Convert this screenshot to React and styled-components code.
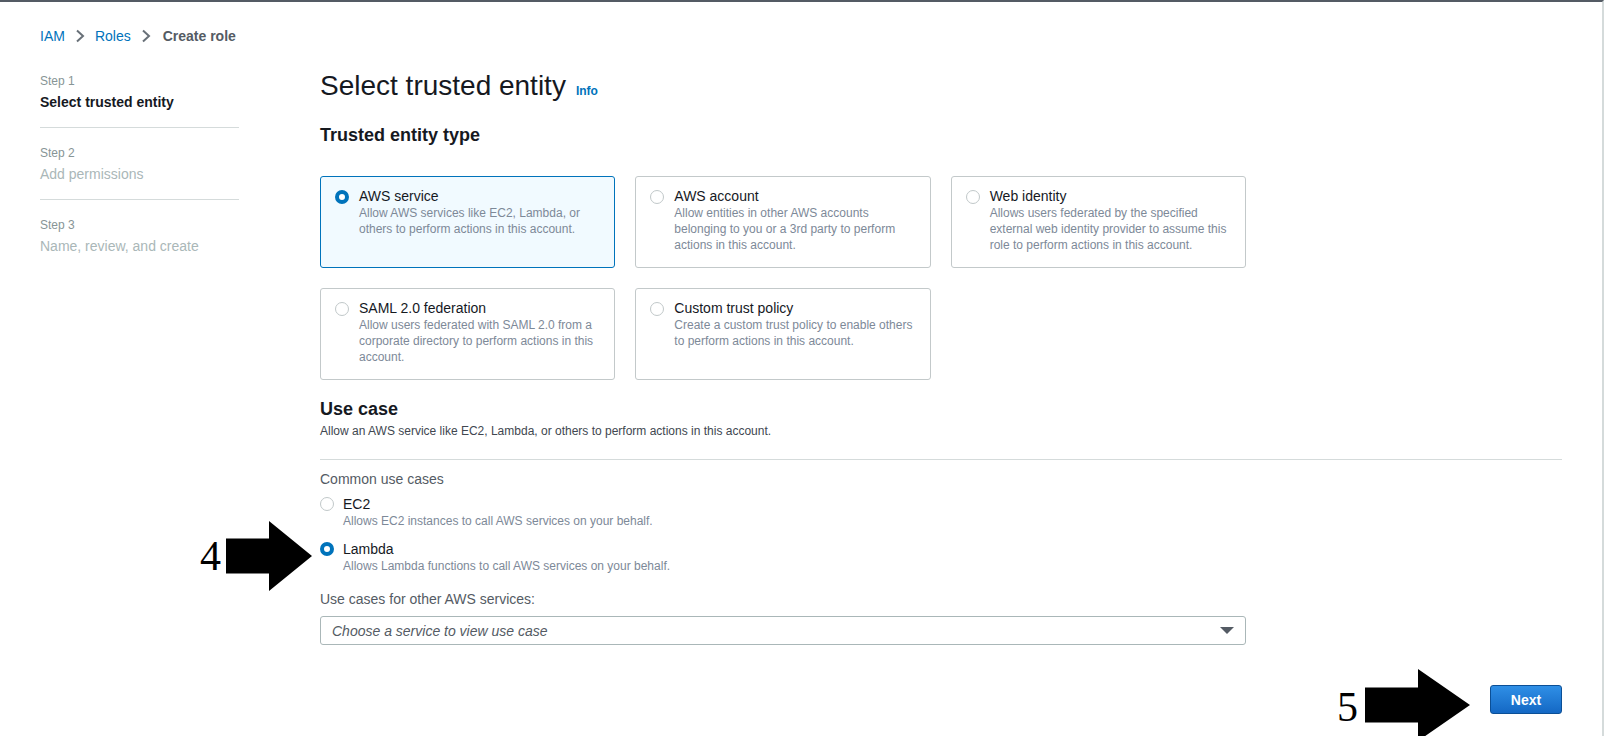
import React from "react";
import styled, { createGlobalStyle } from "styled-components";

const GlobalStyle = createGlobalStyle`
  * { box-sizing: border-box; }
  body {
    margin: 0;
    background: #ffffff;
    font-family: "Liberation Sans", Arial, sans-serif;
    color: #16191f;
  }
`;

const entityTypes = [
  {
    id: "service",
    title: "AWS service",
    lines: ["Allow AWS services like EC2, Lambda, or", "others to perform actions in this account."],
  },
  {
    id: "account",
    title: "AWS account",
    lines: [
      "Allow entities in other AWS accounts",
      "belonging to you or a 3rd party to perform",
      "actions in this account.",
    ],
  },
  {
    id: "web",
    title: "Web identity",
    lines: [
      "Allows users federated by the specified",
      "external web identity provider to assume this",
      "role to perform actions in this account.",
    ],
  },
  {
    id: "saml",
    title: "SAML 2.0 federation",
    lines: [
      "Allow users federated with SAML 2.0 from a",
      "corporate directory to perform actions in this",
      "account.",
    ],
  },
  {
    id: "custom",
    title: "Custom trust policy",
    lines: ["Create a custom trust policy to enable others", "to perform actions in this account."],
  },
];

const useCases = [
  { id: "ec2", title: "EC2", desc: "Allows EC2 instances to call AWS services on your behalf." },
  { id: "lambda", title: "Lambda", desc: "Allows Lambda functions to call AWS services on your behalf." },
];

const steps = [
  { label: "Step 1", name: "Select trusted entity", active: true },
  { label: "Step 2", name: "Add permissions" },
  { label: "Step 3", name: "Name, review, and create" },
];

const Chevron = () => (
  <svg width="12" height="14" viewBox="0 0 12 14">
    <polyline points="3,1.5 9,7 3,12.5" fill="none" stroke="#687078" strokeWidth="2" />
  </svg>
);

const Arrow = ({ width, height, neck }) => {
  const shaftTop = (height - neck) / 2;
  const headX = Math.round(width / 2);
  const pts = [
    `0,${shaftTop}`,
    `${headX},${shaftTop}`,
    `${headX},0`,
    `${width},${height / 2}`,
    `${headX},${height}`,
    `${headX},${shaftTop + neck}`,
    `0,${shaftTop + neck}`,
  ].join(" ");
  return (
    <svg width={width} height={height} viewBox={`0 0 ${width} ${height}`}>
      <polygon points={pts} fill="#000" />
    </svg>
  );
};

const App = () => {
  return (
    <>
      <GlobalStyle />
      <Page>
        <Breadcrumb>
          <CrumbLink>IAM</CrumbLink>
          <Chevron />
          <CrumbLink>Roles</CrumbLink>
          <Chevron />
          <CrumbCurrent>Create role</CrumbCurrent>
        </Breadcrumb>

        <Body>
          <Sidebar>
            {steps.map((step, i) => (
              <StepItem key={step.label} $last={i === steps.length - 1}>
                <StepLabel>{step.label}</StepLabel>
                <StepName $active={step.active}>{step.name}</StepName>
              </StepItem>
            ))}
          </Sidebar>

          <Main>
            <TitleRow>
              <Title>Select trusted entity</Title>
              <InfoLink>Info</InfoLink>
            </TitleRow>

            <SectionTitle $mt={21}>Trusted entity type</SectionTitle>

            <TileGrid>
              {entityTypes.map((t) => {
                const selected = t.id === "service";
                return (
                  <Tile key={t.id} $selected={selected}>
                    <Radio $checked={selected} $top={2} />
                    <div>
                      <TileTitle>{t.title}</TileTitle>
                      {t.lines.map((line) => (
                        <TileDesc key={line}>{line}</TileDesc>
                      ))}
                    </div>
                  </Tile>
                );
              })}
            </TileGrid>

            <SectionTitle $mt={18}>Use case</SectionTitle>
            <UseCaseDesc>
              Allow an AWS service like EC2, Lambda, or others to perform actions in this account.
            </UseCaseDesc>
            <Divider />

            <FieldLabel $mt={9}>Common use cases</FieldLabel>
            <OptionList>
              {useCases.map((u) => (
                <Option key={u.id}>
                  <Radio $checked={u.id === "lambda"} $top={2} />
                  <div>
                    <OptionTitle>{u.title}</OptionTitle>
                    <OptionDesc>{u.desc}</OptionDesc>
                  </div>
                </Option>
              ))}
            </OptionList>

            <FieldLabel $mt={15}>Use cases for other AWS services:</FieldLabel>
            <Select>
              <Placeholder>Choose a service to view use case</Placeholder>
              <Caret />
            </Select>

            <Footer>
              <PrimaryButton>Next</PrimaryButton>
            </Footer>
          </Main>
        </Body>

        <Annotation style={{ left: 200, top: 533 }}>
          <StepNumber>4</StepNumber>
        </Annotation>
        <Annotation style={{ left: 226, top: 519 }}>
          <Arrow width={86} height={70} neck={35} />
        </Annotation>

        <Annotation style={{ left: 1337, top: 684 }}>
          <StepNumber>5</StepNumber>
        </Annotation>
        <Annotation style={{ left: 1365, top: 667 }}>
          <Arrow width={105} height={72} neck={35} />
        </Annotation>
      </Page>
    </>
  );
};

const Page = styled.div`
  position: relative;
  width: 1604px;
  height: 736px;
  overflow: hidden;
  border-top: 2px solid #545b64;
  border-right: 2px solid #d5dbdb;
  padding: 24px 0 0 40px;
`;

const Breadcrumb = styled.nav`
  display: flex;
  align-items: center;
  gap: 9px;
  height: 20px;
  font-size: 14px;
  line-height: 20px;
`;

const CrumbLink = styled.a`
  color: #0073bb;
  text-decoration: none;
`;

const CrumbCurrent = styled.span`
  color: #545b64;
  font-weight: 700;
  margin-left: 2px;
`;

const Body = styled.div`
  display: flex;
  margin-top: 23px;
`;

const Sidebar = styled.aside`
  width: 199px;
  padding-top: 4px;
`;

const StepItem = styled.div`
  padding-bottom: 15px;
  border-bottom: ${(p) => (p.$last ? "none" : "1px solid #d5dbdb")};
  & + & {
    padding-top: 17px;
  }
`;

const StepLabel = styled.div`
  font-size: 12px;
  line-height: 16px;
  color: #879596;
`;

const StepName = styled.div`
  margin-top: 3px;
  font-size: 14px;
  line-height: 20px;
  font-weight: ${(p) => (p.$active ? 700 : 400)};
  color: ${(p) => (p.$active ? "#16191f" : "#aab7b8")};
`;

const Main = styled.main`
  margin-left: 81px;
  width: 1242px;
`;

const TitleRow = styled.div`
  display: flex;
  align-items: baseline;
  gap: 10px;
  height: 34px;
`;

const Title = styled.h1`
  margin: 0;
  font-size: 28px;
  line-height: 34px;
  font-weight: 400;
  color: #16191f;
`;

const InfoLink = styled.a`
  font-size: 12px;
  font-weight: 700;
  color: #0073bb;
`;

const SectionTitle = styled.h2`
  margin: ${(p) => p.$mt}px 0 0;
  font-size: 18px;
  line-height: 22px;
  font-weight: 700;
  color: #16191f;
`;

const TileGrid = styled.div`
  display: grid;
  grid-template-columns: repeat(3, 1fr);
  gap: 20px;
  width: 926px;
  margin-top: 30px;
`;

const Tile = styled.div`
  display: flex;
  gap: 10px;
  height: 92px;
  padding: 11px 14px;
  border: 1px solid ${(p) => (p.$selected ? "#0073bb" : "#c3c9ca")};
  border-radius: 3px;
  background: ${(p) => (p.$selected ? "#f1faff" : "#ffffff")};
`;

const Radio = styled.span`
  flex: none;
  width: 14px;
  height: 14px;
  margin-top: ${(p) => p.$top}px;
  border-radius: 50%;
  background: #ffffff;
  border: ${(p) => (p.$checked ? "4px solid #0073bb" : "1.5px solid #c1c8c9")};
`;

const TileTitle = styled.div`
  font-size: 14px;
  line-height: 17px;
  color: #16191f;
`;

const TileDesc = styled.div`
  font-size: 12px;
  line-height: 16px;
  color: #7d8998;
  white-space: nowrap;
`;

const UseCaseDesc = styled.div`
  margin-top: 3px;
  font-size: 12px;
  line-height: 16px;
  color: #414750;
`;

const Divider = styled.hr`
  margin: 20px 0 0;
  border: none;
  height: 1px;
  background: #d5dbdb;
`;

const FieldLabel = styled.div`
  margin-top: ${(p) => p.$mt}px;
  font-size: 14px;
  line-height: 20px;
  color: #545b64;
`;

const OptionList = styled.div`
  margin-top: 6px;
  display: flex;
  flex-direction: column;
  gap: 11px;
`;

const Option = styled.label`
  display: flex;
  gap: 9px;
`;

const OptionTitle = styled.div`
  font-size: 14px;
  line-height: 18px;
  color: #16191f;
`;

const OptionDesc = styled.div`
  font-size: 12px;
  line-height: 16px;
  color: #7d8998;
`;

const Select = styled.div`
  display: flex;
  align-items: center;
  justify-content: space-between;
  width: 926px;
  height: 29px;
  margin-top: 7px;
  padding: 0 11px 0 11px;
  border: 1px solid #aab7b8;
  border-radius: 3px;
  background: #ffffff;
`;

const Placeholder = styled.span`
  font-size: 14px;
  font-style: italic;
  color: #545b64;
`;

const Caret = styled.span`
  width: 0;
  height: 0;
  border-left: 7px solid transparent;
  border-right: 7px solid transparent;
  border-top: 7px solid #545b64;
`;

const Footer = styled.div`
  display: flex;
  justify-content: flex-end;
  margin-top: 40px;
`;

const PrimaryButton = styled.button`
  width: 72px;
  height: 29px;
  border: 1px solid #0b4f96;
  border-radius: 3px;
  background: linear-gradient(#2f8fe6, #1468c4);
  color: #ffffff;
  font-family: "Liberation Sans", Arial, sans-serif;
  font-size: 14px;
  font-weight: 700;
`;

const Annotation = styled.div`
  position: absolute;
  line-height: 1;
`;

const StepNumber = styled.span`
  font-family: "Liberation Serif", "Times New Roman", serif;
  font-size: 42px;
  line-height: 1;
  color: #000;
`;

export default App;
